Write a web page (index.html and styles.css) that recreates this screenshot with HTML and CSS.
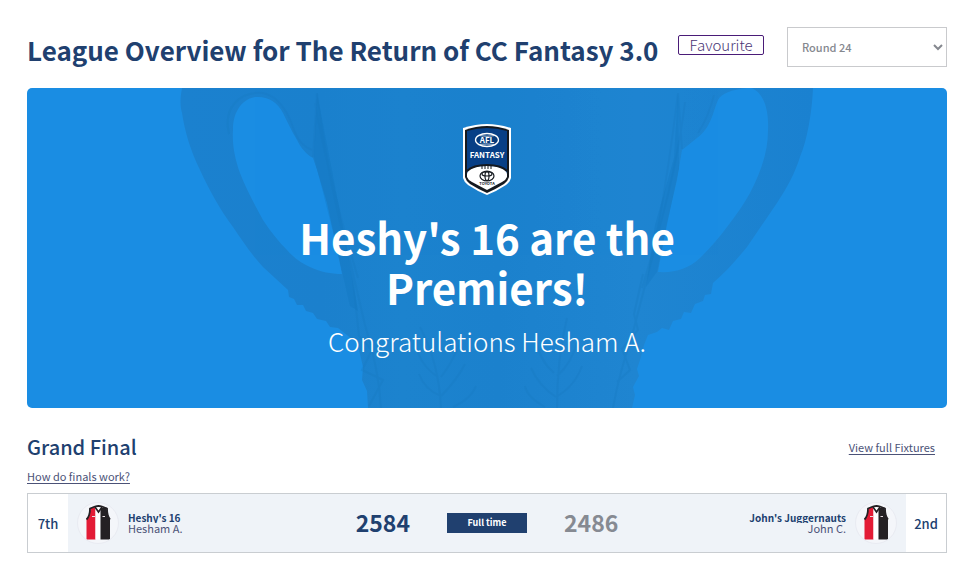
FILE: index.html
```html
<!DOCTYPE html>
<html lang="en">
<head>
<meta charset="utf-8">
<meta name="viewport" content="width=device-width, initial-scale=1">
<title>League Overview</title>
<link rel="stylesheet" href="styles.css">
</head>
<body>
<svg class="defs" width="0" height="0" aria-hidden="true">
  <symbol id="guernsey" viewBox="0 0 42 42">
    <path d="M12.500 5C12 10 11 13 8.500 16V36.500H17.500V4Z" fill="#e31b35"/>
    <path d="M17.500 5H22.500V36.500H17.500Z" fill="#fff"/>
    <path d="M22.500 5L28.500 4.500C29 10 30 13 32 16V36.500H22.500Z" fill="#242124"/>
    <path d="M17 4L20.500 9L24 4" fill="#fff" stroke="#242124" stroke-width="1.600"/>
    <path d="M17 3.500Q20.500 2.500 24 3.500M17 3.500L12 5.500C12 11 11 14 8.500 16.500M24 3.500L29 5.500C29 11 30 14 32 16.500" fill="none" stroke="#242124" stroke-width="1.800"/>
    <path d="M14 13.500H17M24.500 13.500H27" stroke="#e8dfe3" stroke-width="1"/>
  </symbol>
</svg>
<main class="page">
  <header class="page-head">
    <div class="title-group">
      <h1>League Overview for The Return of CC Fantasy 3.0</h1>
      <button class="favourite" type="button">Favourite</button>
    </div>
    <select class="round" aria-label="Round"><option>Round 24</option></select>
  </header>

  <section class="banner">
    <svg class="cup" viewBox="0 0 920 320" preserveAspectRatio="xMidYMin slice" aria-hidden="true">
      <defs>
        <linearGradient id="metal" x1="155" x2="786" gradientUnits="userSpaceOnUse">
          <stop offset="0" stop-color="#1b81cf"/><stop offset=".22" stop-color="#1b80cd"/>
          <stop offset=".35" stop-color="#1c83ce"/><stop offset=".5" stop-color="#1b81cd"/>
          <stop offset=".72" stop-color="#1f85d1"/><stop offset="1" stop-color="#1a81d0"/>
        </linearGradient>
      </defs>
      <path fill="url(#metal)" fill-rule="evenodd" d="M155 0C153 10 153 18 155 25C158 45 164 64 173 82C182 102 194 123 206 139C216 154 225 167 236 179L261 202L262 209L267 211L270 217L276 217L279 223L286 225L290 231L299 233L303 239L311 240L330 255L333 266L336 279L335 292L340 303L341 320H605L608 307L606 299L612 288L610 281L614 269L617 257L621 247L630 244L635 240L642 242L646 233L654 231L657 224L664 225L668 216L676 213L678 207L684 206L686 195C699 184 710 171 720 159L750 115C760 100 768 85 773 69C780 53 785 25 786 0ZM228 9C213 12 206 26 206 42C205 57 208 71 213 85C219 101 228 117 236 132C244 144 252 154 260 162C268 171 276 176 283 179C294 184 304 186 315 186L308 152L300 115L290 82L286 70C279 66 274 60 270 52C264 42 260 33 256 25C250 13 240 8 228 9ZM720 0C704 2 695 5 691 12C686 24 684 40 670 50L655 62L650 92L640 135L631 184C648 185 661 181 673 170C683 160 692 150 700 139C709 127 717 116 723 105C735 82 741 62 741 42C742 20 736 4 724 0Z"/>
      <g fill="none" stroke="#1779c0" stroke-width="2" opacity=".3">
        <path d="M286 69L290 5Q300 90 323 173L338 237Q352 282 354 320M288 15Q302 92 331 190"/>
        <path d="M655 61L651 5Q642 80 627 163L606 244Q592 286 586 320M658 14Q649 91 615 200"/>
        <path d="M202 46C196 20 212 3 236 5C251 8 261 24 267 42Q273 58 285 62M671 45Q681 30 687 7"/>
        <path d="M325 183L332 248L345 262L335 282L356 292L342 318M616 186L607 226L611 242L595 261L603 282L590 294"/>
        <path d="M414 320Q412 275 393 239M414 308Q398 302 392 286M414 308Q430 292 438 276M411 289Q397 280 391 265M414 289Q425 275 432 257M530 320Q530 270 540 230M529 309Q548 298 555 278M529 309Q512 298 504 280M530 288Q545 275 551 252M527 285Q512 272 509 251M518 319Q500 309 498 298M426 319Q444 311 449 298"/>
      </g>
      <g fill="#1274bc" opacity=".3">
        <path d="M290 5L287 69L306 144L323 218L331 223L317 145Z"/>
        <path d="M651 5L647 70L628 137L619 199L630 184L652 80Z"/>
      </g>
    </svg>
    <div class="banner-content">
      <svg class="logo" viewBox="0 0 48 71" role="img" aria-label="AFL Fantasy Toyota">
        <path d="M24 0Q35 0 48 4V54Q47 58 43 61Q34 67 24 71Q14 67 5 61Q1 58 0 54V4Q13 0 24 0Z" fill="#fff"/>
        <path d="M24 2Q35 2 46 6V53Q45 57 41 60Q33 65 24 69Q15 65 7 60Q3 57 2 53V6Q13 2 24 2Z" fill="#15191f"/>
        <path d="M24 4Q34 4 44 7V50H4V7Q14 4 24 4Z" fill="#073f86"/>
        <path d="M4 50Q5 42 24 42Q43 42 44 50V53Q43 56 39 58L24 66L9 58Q5 56 4 53Z" fill="#fff"/>
        <path d="M4 47Q10 41 24 41Q38 41 44 47" fill="none" stroke="#15191f" stroke-width="2"/>
        <ellipse cx="24" cy="16" rx="11.500" ry="6.500" fill="#063b7c" stroke="#fff" stroke-width="1.300"/>
        <path d="M15 11.500Q24 13 33 11.500M15 20.500Q24 19.500 33 20.500" fill="none" stroke="#fff" stroke-width=".7"/>
        <text x="24" y="19" class="logo-afl">AFL</text>
        <text x="24" y="34" class="logo-fantasy">FANTASY</text>
        <path d="M19 41V45M22 41V45M25 41V45M28 41V45" stroke="#15191f" stroke-width="1"/>
        <g fill="none" stroke="#15191f" stroke-width="1.200"><ellipse cx="24" cy="52" rx="7" ry="4.800"/><ellipse cx="24" cy="50" rx="5" ry="2"/><ellipse cx="24" cy="52" rx="2" ry="4.500"/></g>
        <text x="24" y="61" class="logo-toyota">TOYOTA</text>
      </svg>
      <h2>Heshy's 16 are the Premiers!</h2>
      <p>Congratulations Hesham A.</p>
    </div>
  </section>

  <section class="final">
    <div class="final-head">
      <h3>Grand Final</h3>
      <a class="fixtures" href="#">View full Fixtures</a>
    </div>
    <a class="help" href="#">How do finals work?</a>
    <div class="match">
      <div class="rank">7th</div>
      <div class="team">
        <span class="avatar"><svg width="42" height="42" aria-hidden="true"><use href="#guernsey"/></svg></span>
        <div class="names"><strong>Heshy's 16</strong><span>Hesham A.</span></div>
      </div>
      <div class="result">
        <span class="score">2584</span>
        <span class="status">Full time</span>
        <span class="score lost">2486</span>
      </div>
      <div class="team away">
        <div class="names"><strong>John's Juggernauts</strong><span>John C.</span></div>
        <span class="avatar"><svg width="42" height="42" aria-hidden="true"><use href="#guernsey"/></svg></span>
      </div>
      <div class="rank">2nd</div>
    </div>
  </section>
</main>
</body>
</html>
```
FILE: styles.css
```css
* { box-sizing: border-box; }
body {
  margin: 0;
  background: #fff;
  color: #20406f;
  font-family: "Noto Sans CJK SC", "Noto Sans", sans-serif;
}
h1, h2, h3, p { margin: 0; }
.defs { position: absolute; }
.page { padding: 27px 19px 14px 27px; }
.page-head { display: flex; justify-content: space-between; align-items: flex-start; }
.title-group { display: flex; align-items: flex-start; gap: 20px; padding-top: 8px; }
h1 { font-size: 26px; line-height: 30px; font-weight: 700; white-space: nowrap; }
.favourite {
  height: 20px;
  padding: 0 10px;
  border: 1px solid #4a1c78;
  border-radius: 2px;
  background: #fff;
  color: #4a3575;
  font-family: inherit;
  font-size: 15px;
  font-weight: 300;
  line-height: 18px;
}
.round {
  width: 160px;
  height: 40px;
  padding: 0 0 0 10px;
  border: 1px solid #c9cacd;
  border-radius: 0;
  background: #fff;
  color: #85888f;
  font-family: inherit;
  font-size: 11px;
  font-weight: 500;
}
.banner {
  position: relative;
  min-height: 320px;
  margin-top: 21px;
  overflow: hidden;
  border-radius: 5px;
  background: #1a8de3;
  color: #fff;
}
.cup { position: absolute; inset: 0; width: 100%; height: 100%; }
.banner-content {
  position: relative;
  display: flex;
  flex-direction: column;
  align-items: center;
  padding-top: 36px;
  text-align: center;
}
.logo { width: 48px; height: 71px; }
.logo text { text-anchor: middle; fill: #fff; font-weight: 700; }
.logo .logo-afl { font-size: 8px; }
.logo .logo-fantasy { font-size: 8px; }
.logo .logo-toyota { font-size: 4px; fill: #15191f; }
.banner h2 { max-width: 460px; margin-top: 17px; font-size: 42px; line-height: 50px; font-weight: 700; }
.banner p { margin-top: 13px; font-size: 26px; line-height: 32px; font-weight: 300; }
.final { margin-top: 24px; }
.final-head { display: flex; justify-content: space-between; align-items: center; padding-right: 12px; }
h3 { font-size: 20px; line-height: 30px; font-weight: 500; }
a { color: #4b5277; font-size: 11px; line-height: 16px; text-underline-offset: 2px; }
.help { display: block; width: fit-content; margin-top: 6px; }
.match {
  display: grid;
  grid-template-columns: 40px 1fr auto 1fr 40px;
  min-height: 60px;
  margin-top: 9px;
  border: 1px solid #c9cdd1;
  background: #eff3f8;
}
.rank { display: flex; align-items: center; justify-content: center; background: #fff; font-size: 13px; font-weight: 500; }
.team { display: flex; align-items: center; gap: 9px; padding: 0 9px; }
.away { justify-content: flex-end; text-align: right; }
.avatar {
  width: 42px;
  height: 42px;
  overflow: hidden;
  border: 1px solid #e9ebf2;
  border-radius: 50%;
  background: #f4f6fa;
}
.avatar svg { display: block; }
.names { display: flex; flex-direction: column; color: #4b5277; font-size: 11px; line-height: 11px; }
.names strong { overflow: hidden; color: #20406f; font-size: 10px; }
.result { display: flex; align-items: center; gap: 37px; }
.score { padding-bottom: 2px; font-size: 23px; font-weight: 700; }
.lost { color: #868a92; }
.status {
  width: 80px;
  height: 20px;
  background: #20406f;
  color: #fff;
  font-size: 9px;
  font-weight: 700;
  line-height: 20px;
  text-align: center;
}
```
